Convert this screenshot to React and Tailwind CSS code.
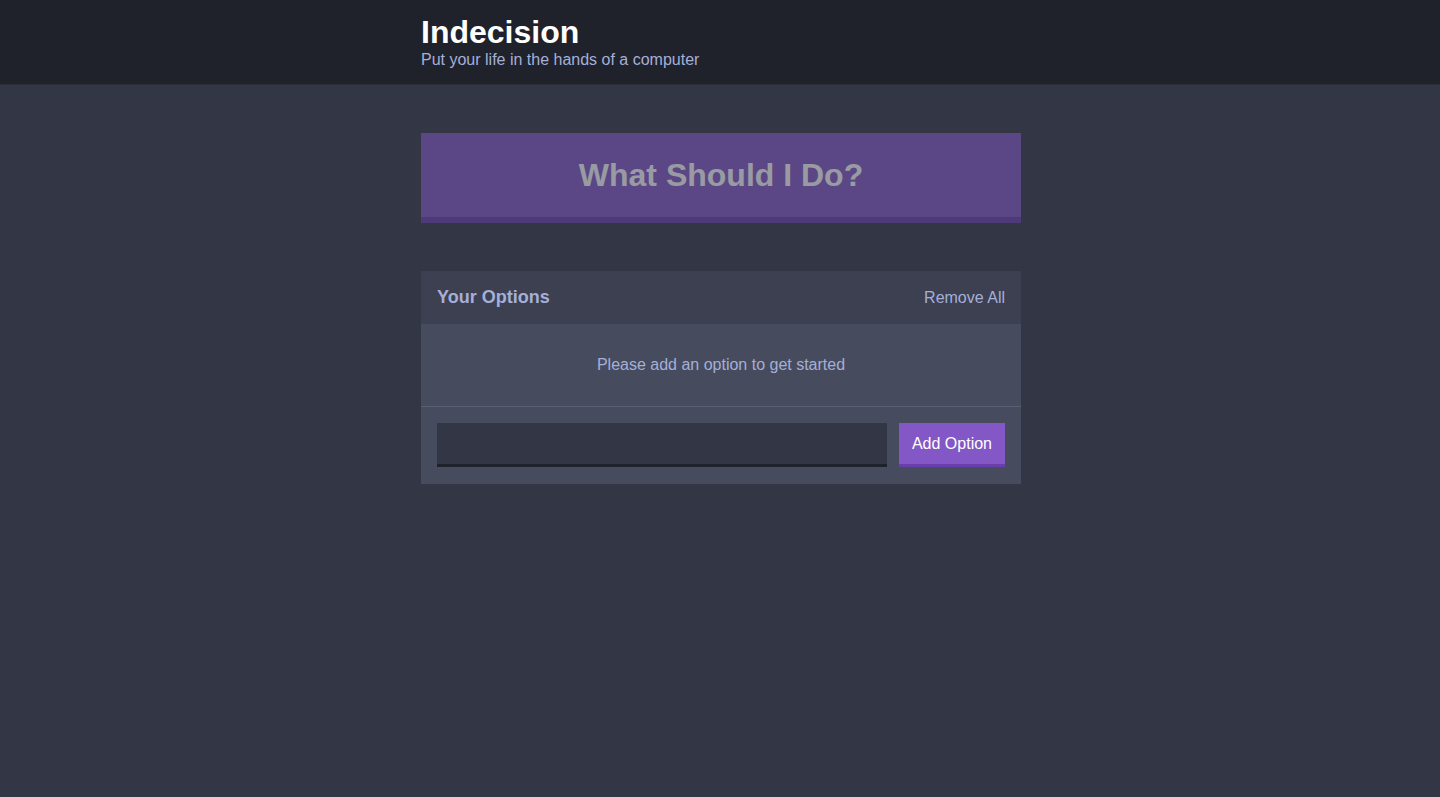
import React from 'react';

export default function App() {
  return (
    <div className="min-h-screen bg-[#333745] font-['Liberation_Sans',Arial,sans-serif]">
      <header className="bg-[#20222b] border-b border-[#2b2e38] pt-4 pb-[14px]">
        <div className="w-[600px] mx-auto pl-px">
          <h1 className="text-[32px] leading-none font-bold text-white">Indecision</h1>
          <h2 className="mt-[2px] text-base leading-5 text-[#a5afd7]">Put your life in the hands of a computer</h2>
        </div>
      </header>

      <div className="w-[600px] mx-auto pt-12 translate-x-px">
        {/* big button, disabled until there are options */}
        <button
          disabled
          className="w-full h-[90px] bg-[#8357c5] border-b-[6px] border-[#6a3eab] text-white text-[32px] font-bold opacity-50 cursor-not-allowed"
        >
          What Should I Do?
        </button>

        <div className="mt-12 bg-[#464b5e]">
          <div className="bg-[#3c4051] h-[53px] px-4 flex items-center justify-between">
            <h3 className="text-[18px] font-bold text-[#a5afd7]">Your Options</h3>
            <button className="text-base text-[#a5afd7]">Remove All</button>
          </div>

          <p className="text-base leading-5 text-[#a5afd7] text-center py-[31px] border-b border-[#5a5f73]">
            Please add an option to get started
          </p>

          <form className="flex gap-3 px-4 pt-4 pb-[17px]" onSubmit={(e) => e.preventDefault()}>
            <input
              type="text"
              name="option"
              className="flex-1 h-11 bg-[#333745] border-b-[3px] border-[#20222b] text-[#a5afd7] px-3 outline-none"
            />
            <button className="h-11 px-[13px] bg-[#8357c5] border-b-[3px] border-[#6a3eab] text-white text-base">
              Add Option
            </button>
          </form>
        </div>
      </div>
    </div>
  );
}
